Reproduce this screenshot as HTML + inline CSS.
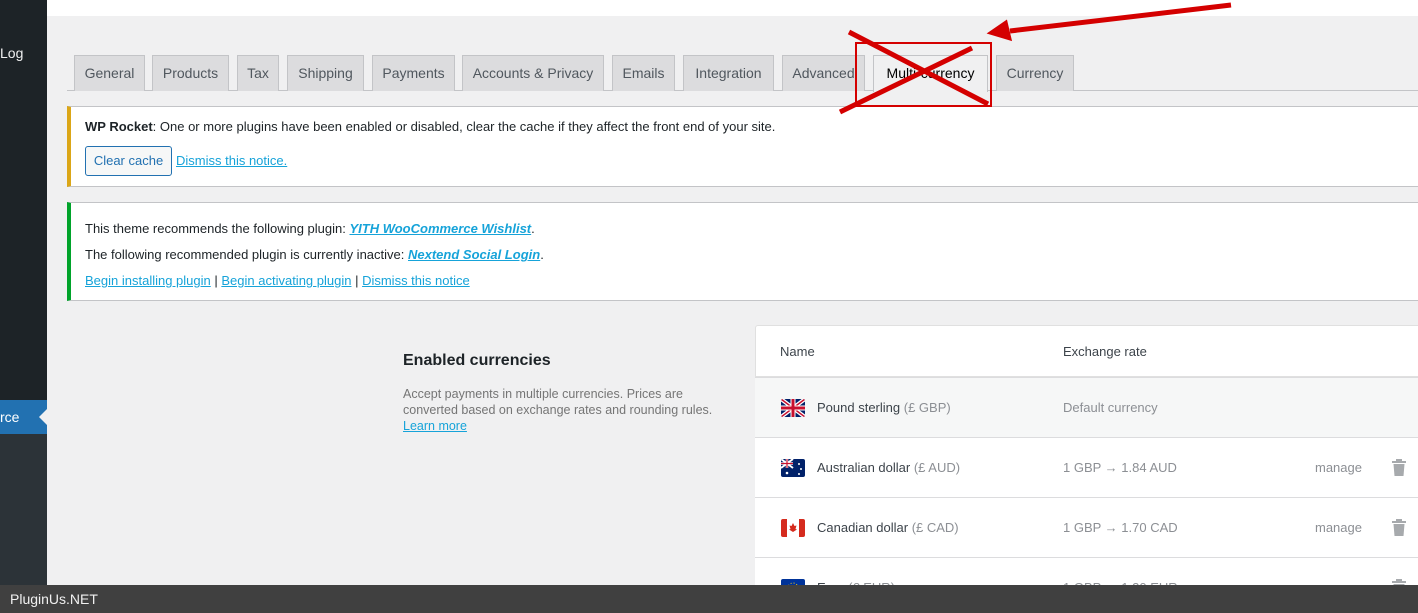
<!DOCTYPE html>
<html><head><meta charset="utf-8"><style>
*{margin:0;padding:0;box-sizing:border-box}
html,body{width:1418px;height:613px;overflow:hidden}
body{background:#f0f0f1;font-family:"Liberation Sans",sans-serif;font-size:13px;color:#3c434a;position:relative}
.a{position:absolute}
.tab{position:absolute;top:55px;height:36px;background:#dcdcde;border:1px solid #c3c4c7;border-bottom:none;color:#50575e;font-size:14px;line-height:34px;text-align:center;white-space:nowrap}
.tab.act{background:#f0f0f1;color:#000;height:37px}
.lnk{color:#16a3d9;text-decoration:underline}
.row{position:absolute;left:755px;width:663px;height:60px;border-top:1px solid #dcdcde;background:#fff}
.row span{position:absolute;top:22px;font-size:13px}
.nm{left:62px;color:#3c434a}.nm i{font-style:normal;color:#8c8f94}
.rt{left:308px;color:#8c8f94}
.mg{left:560px;color:#8c8f94}
.fl{position:absolute;left:26px;top:21px;width:24px;height:18px;border-radius:2px;overflow:hidden}
.tr{position:absolute;left:637px;top:21px}
</style></head><body>
<div class="a" style="left:0;top:0;width:47px;height:400px;background:#1d2327"></div>
<div class="a" style="left:0;top:400px;width:47px;height:34px;background:#2271b1"></div>
<div class="a" style="left:0;top:434px;width:47px;height:151px;background:#2c3338"></div>
<div class="a" style="left:0;top:45px;color:#f0f0f1;font-size:14px;">Log</div>
<div class="a" style="left:0;top:409px;color:#fff;font-size:14px;">rce</div>
<div class="a" style="left:39px;top:409px;width:0;height:0;border-top:8px solid transparent;border-bottom:8px solid transparent;border-right:8px solid #f0f0f1"></div>
<div class="a" style="left:47px;top:0;width:1371px;height:16px;background:#fff"></div>

<div class="a" style="left:67px;top:90px;width:1351px;height:1px;background:#c3c4c7"></div>
<div class="tab" style="left:74px;width:71px">General</div>
<div class="tab" style="left:152px;width:77px">Products</div>
<div class="tab" style="left:237px;width:42px">Tax</div>
<div class="tab" style="left:287px;width:77px">Shipping</div>
<div class="tab" style="left:372px;width:83px">Payments</div>
<div class="tab" style="left:462px;width:142px">Accounts &amp; Privacy</div>
<div class="tab" style="left:612px;width:63px">Emails</div>
<div class="tab" style="left:683px;width:91px">Integration</div>
<div class="tab" style="left:782px;width:83px">Advanced</div>
<div class="tab act" style="left:873px;width:115px">Multi-currency</div>
<div class="tab" style="left:996px;width:78px">Currency</div>

<div class="a" style="left:67px;top:106px;width:1351px;height:81px;background:#fff;border:1px solid #c3c4c7;border-left:4px solid #dba617;border-right:none"></div>
<div class="a" style="left:85px;top:119px;color:#1d2327"><b>WP Rocket</b>: One or more plugins have been enabled or disabled, clear the cache if they affect the front end of your site.</div>
<div class="a" style="left:85px;top:146px;width:87px;height:30px;border:1px solid #2271b1;border-radius:3px;background:#f6f7f7;color:#2271b1;line-height:28px;text-align:center">Clear cache</div>
<div class="a lnk" style="left:176px;top:153px">Dismiss this notice.</div>

<div class="a" style="left:67px;top:202px;width:1351px;height:99px;background:#fff;border:1px solid #c3c4c7;border-left:4px solid #00a32a;border-right:none"></div>
<div class="a" style="left:85px;top:221px;color:#1d2327">This theme recommends the following plugin: <i class="lnk" style="font-weight:bold">YITH WooCommerce Wishlist</i>.</div>
<div class="a" style="left:85px;top:247px;color:#1d2327">The following recommended plugin is currently inactive: <i class="lnk" style="font-weight:bold">Nextend Social Login</i>.</div>
<div class="a" style="left:85px;top:273px;color:#1d2327"><span class="lnk">Begin installing plugin</span> | <span class="lnk">Begin activating plugin</span> | <span class="lnk">Dismiss this notice</span></div>

<div class="a" style="left:403px;top:352px;font-size:16px;font-weight:bold;color:#1d2327">Enabled currencies</div>
<div class="a" style="left:403px;top:386px;width:330px;line-height:16px;color:#757575;font-size:12.5px">Accept payments in multiple currencies. Prices are converted based on exchange rates and rounding rules.<br><span class="lnk">Learn more</span></div>

<div class="a" style="left:755px;top:325px;width:663px;height:52px;background:#fff;border:1px solid #e0e0e0;border-right:none;border-radius:3px 0 0 0"></div>
<div class="a" style="left:780px;top:344px;color:#3c434a">Name</div>
<div class="a" style="left:1063px;top:344px;color:#3c434a">Exchange rate</div>

<div class="row" style="top:377px;background:#f6f7f7">
<svg class="fl" viewBox="0 0 24 18"><rect width="24" height="18" fill="#012169"/><path d="M0 0L24 18M24 0L0 18" stroke="#fff" stroke-width="4"/><path d="M0 0L24 18M24 0L0 18" stroke="#c8102e" stroke-width="1.5"/><path d="M12 0V18M0 9H24" stroke="#fff" stroke-width="5"/><path d="M12 0V18M0 9H24" stroke="#c8102e" stroke-width="3"/></svg>
<span class="nm">Pound sterling <i>(£ GBP)</i></span><span class="rt">Default currency</span></div>

<div class="row" style="top:437px">
<svg class="fl" viewBox="0 0 24 18"><rect width="24" height="18" fill="#012169"/><path d="M0 0L12 9M12 0L0 9" stroke="#fff" stroke-width="2"/><path d="M6 0V9M0 4.5H12" stroke="#fff" stroke-width="2.5"/><path d="M6 0V9M0 4.5H12" stroke="#c8102e" stroke-width="1.2"/><circle cx="6" cy="14" r="1.3" fill="#fff"/><circle cx="18" cy="5" r="1" fill="#fff"/><circle cx="20" cy="10" r="1" fill="#fff"/><circle cx="18" cy="15" r="1" fill="#fff"/></svg>
<span class="nm">Australian dollar <i>(£ AUD)</i></span><span class="rt">1 GBP → 1.84 AUD</span><span class="mg">manage</span>
<svg class="tr" width="14" height="17" viewBox="0 0 14 17"><rect x="4" y="0" width="6" height="2" fill="#a7aaad"/><rect x="0" y="2" width="14" height="2" fill="#a7aaad"/><path d="M1.5 5H12.5L11.5 17H2.5Z" fill="#a7aaad"/></svg></div>

<div class="row" style="top:497px">
<svg class="fl" viewBox="0 0 24 18"><rect width="24" height="18" fill="#fff"/><rect width="6" height="18" fill="#d52b1e"/><rect x="18" width="6" height="18" fill="#d52b1e"/><path d="M12 4L13.5 7L15.5 6.5L14.5 10L16 10.5L12 13L8 10.5L9.5 10L8.5 6.5L10.5 7Z" fill="#d52b1e"/></svg>
<span class="nm">Canadian dollar <i>(£ CAD)</i></span><span class="rt">1 GBP → 1.70 CAD</span><span class="mg">manage</span>
<svg class="tr" width="14" height="17" viewBox="0 0 14 17"><rect x="4" y="0" width="6" height="2" fill="#a7aaad"/><rect x="0" y="2" width="14" height="2" fill="#a7aaad"/><path d="M1.5 5H12.5L11.5 17H2.5Z" fill="#a7aaad"/></svg></div>

<div class="row" style="top:557px;height:28px;overflow:hidden">
<svg class="fl" viewBox="0 0 24 18"><rect width="24" height="18" fill="#003399"/><circle cx="12" cy="9" r="5" fill="none" stroke="#fc0" stroke-width="1" stroke-dasharray="1 2"/></svg>
<span class="nm">Euro <i>(€ EUR)</i></span><span class="rt">1 GBP → 1.20 EUR</span>
<svg class="tr" width="14" height="17" viewBox="0 0 14 17"><rect x="4" y="0" width="6" height="2" fill="#a7aaad"/><rect x="0" y="2" width="14" height="2" fill="#a7aaad"/><path d="M1.5 5H12.5L11.5 17H2.5Z" fill="#a7aaad"/></svg></div>

<div class="a" style="left:0;top:585px;width:1418px;height:28px;background:#404040;color:#f0f0f0;font-size:14px;line-height:28px;padding-left:10px">PluginUs.NET</div>

<svg class="a" style="left:0;top:0" width="1418" height="613">
<rect x="856" y="43" width="135" height="63" fill="none" stroke="#d40000" stroke-width="2"/>
<path d="M849 32L988 104M840 112L972 48" stroke="#d40000" stroke-width="5"/>
<path d="M1231 5L1010 31" stroke="#d40000" stroke-width="5"/>
<path d="M990 33L1006 22L1010 39Z" fill="#d40000" stroke="#d40000" stroke-width="3"/>
</svg>
</body></html>
